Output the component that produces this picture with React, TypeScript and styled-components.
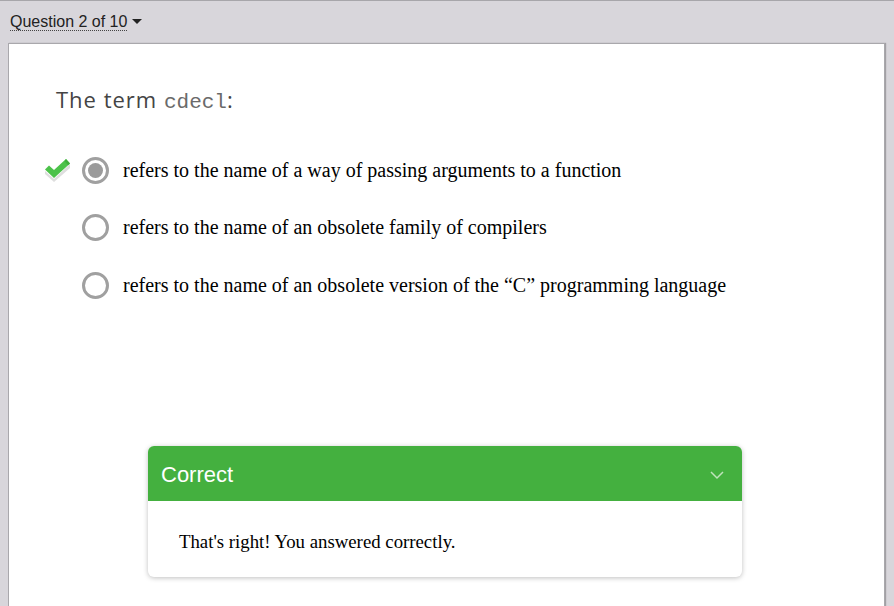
import React from "react";
import styled, { createGlobalStyle } from "styled-components";

const Global = createGlobalStyle`
  html, body { margin: 0; padding: 0; }
  body { background: #d8d6db; overflow: hidden; }
`;

const Page = styled.div`
  width: 894px;
  height: 606px;
  box-sizing: border-box;
  border-top: 1px solid #a7a6aa;
  background: #d8d6db;
  display: flex;
  flex-direction: column;
  font-family: "Liberation Serif", serif;
`;

const TopBar = styled.div`
  height: 42px;
  box-sizing: border-box;
  padding: 12px 0 0 10px;
  display: flex;
  align-items: flex-start;
`;

const QuestionSelect = styled.div`
  font-family: "Liberation Sans", Arial, sans-serif;
  font-size: 16px;
  color: #222;
  display: flex;
  align-items: center;
  gap: 5px;
`;

const QuestionLabel = styled.span`
  border-bottom: 1px dotted #444;
  line-height: 17px;
`;

const Caret = styled.span`
  width: 0;
  height: 0;
  border-left: 5px solid transparent;
  border-right: 5px solid transparent;
  border-top: 5px solid #222;
  margin-top: -2px;
`;

const Panel = styled.div`
  flex: 1;
  margin: 0 9px 0 8px;
  background: #fff;
  border: 1px solid #a9a8ac;
  border-bottom: none;
  box-shadow: 1px 0 1px rgba(0, 0, 0, 0.25);
  display: flex;
  flex-direction: column;
  padding: 40px 0 0 47px;
  box-sizing: border-box;
`;

const Title = styled.div`
  font-family: "Open Sans", Lato, sans-serif;
  font-size: 22px;
  color: #444;
  line-height: 30px;
  letter-spacing: 1px;
`;

const Code = styled.code`
  font-family: "Liberation Mono", monospace;
  font-size: 21px;
  color: #6a6a6a;
  letter-spacing: 0;
`;

const Options = styled.div`
  margin-top: 38px;
  display: flex;
  flex-direction: column;
  gap: 29.5px;
`;

const Option = styled.div`
  display: flex;
  align-items: center;
  height: 28px;
`;

const CheckSlot = styled.div`
  width: 28px;
  height: 26px;
  margin-left: -12px;
  margin-right: 10px;
  display: flex;
  align-items: center;
  justify-content: center;
`;

const Radio = styled.div<{ $checked?: boolean }>`
  width: 27px;
  height: 27px;
  box-sizing: border-box;
  border-radius: 50%;
  border: 3px solid #a0a0a0;
  display: flex;
  align-items: center;
  justify-content: center;
  margin-right: 14px;
  &::after {
    content: "";
    display: ${(p) => (p.$checked ? "block" : "none")};
    width: 15px;
    height: 15px;
    border-radius: 50%;
    background: #9b9b9b;
  }
`;

const OptionText = styled.span`
  font-family: "Liberation Serif", serif;
  font-size: 20px;
  color: #000;
`;

const FeedbackWrap = styled.div`
  margin-top: 147px;
  margin-left: 92px;
  width: 594px;
  border-radius: 6px;
  overflow: hidden;
  background: #fff;
  box-shadow: 0 1px 5px rgba(0, 0, 0, 0.25);
`;

const FeedbackHeader = styled.div`
  height: 55px;
  box-sizing: border-box;
  padding: 3px 18px 0 13px;
  background: #44b03f;
  display: flex;
  align-items: center;
  justify-content: space-between;
`;

const FeedbackTitle = styled.span`
  font-family: "Liberation Sans", Arial, sans-serif;
  font-size: 22px;
  color: #fff;
`;

const FeedbackBody = styled.div`
  padding: 30px 31px 24px;
  font-family: "Liberation Serif", serif;
  font-size: 18.8px;
  color: #000;
`;

const Check = () => (
  <svg width="28" height="26" viewBox="0 0 28 26">
    <path d="M1 14 L10 22 L26 7 L26 11 L10 25 L1 17 Z" fill="#dedede" />
    <path d="M1 12.5 L5 8.5 L10 13 L22 2 L26 6.5 L10 21 Z" fill="#4cc24a" />
    <path d="M22 2 L26 6.5 L24 8.3 L20.5 4.3 Z" fill="#3fb03d" />
  </svg>
);

const Chevron = () => (
  <svg width="14" height="9" viewBox="0 0 14 9">
    <path d="M1 1 L7 7 L13 1" fill="none" stroke="#bfe3bc" strokeWidth="1.5" />
  </svg>
);

const options = [
  { text: "refers to the name of a way of passing arguments to a function", checked: true },
  { text: "refers to the name of an obsolete family of compilers", checked: false },
  { text: "refers to the name of an obsolete version of the \u201CC\u201D programming language", checked: false },
];

export default function App() {
  return (
    <>
      <Global />
      <Page>
        <TopBar>
          <QuestionSelect>
            <QuestionLabel>Question 2 of 10</QuestionLabel>
            <Caret />
          </QuestionSelect>
        </TopBar>
        <Panel>
          <Title>
            The term <Code>cdecl</Code>:
          </Title>
          <Options>
            {options.map((o, i) => (
              <Option key={i}>
                <CheckSlot>{o.checked ? <Check /> : null}</CheckSlot>
                <Radio $checked={o.checked} />
                <OptionText>{o.text}</OptionText>
              </Option>
            ))}
          </Options>
          <FeedbackWrap>
            <FeedbackHeader>
              <FeedbackTitle>Correct</FeedbackTitle>
              <Chevron />
            </FeedbackHeader>
            <FeedbackBody>That's right! You answered correctly.</FeedbackBody>
          </FeedbackWrap>
        </Panel>
      </Page>
    </>
  );
}
